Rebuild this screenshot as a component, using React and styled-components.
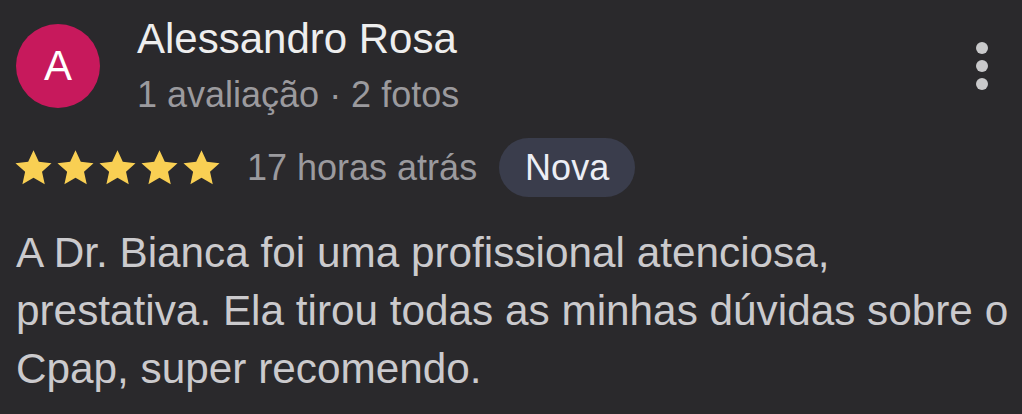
import React from 'react';
import styled, {createGlobalStyle} from "styled-components";

const GlobalStyle = createGlobalStyle`
    html, body {
        margin: 0;
        padding: 0;
        background-color: #2a292c;
    }
    body {
        font-family: 'Liberation Sans', Arial, sans-serif;
    }
`

function Star() {
    return (
        <svg width="39" height="37" viewBox="0 0 24 23">
            <path d="M12 0.8l3.3 7.2 7.9 0.8-5.9 5.3 1.7 7.8L12 17.9l-6.9 4 1.7-7.8L0.8 8.8l7.9-0.8z" fill="#f9cf53"/>
        </svg>
    )
}

export default function App() {
    const stars = [1, 2, 3, 4, 5]
    return (
        <>
        <GlobalStyle/>
        <Review>
            <Header>
                <Avatar>A</Avatar>
                <Author>
                    <Name>Alessandro Rosa</Name>
                    <Meta>1 avaliação · 2 fotos</Meta>
                </Author>
                <MoreButton aria-label="Mais opções">
                    <Dot/><Dot/><Dot/>
                </MoreButton>
            </Header>
            <RatingRow>
                <Stars>
                    {stars.map((s) => <Star key={s}/>)}
                </Stars>
                <When>17 horas atrás</When>
                <Badge>Nova</Badge>
            </RatingRow>
            <Body>
                A Dr. Bianca foi uma profissional atenciosa,<br/>
                prestativa. Ela tirou todas as minhas dúvidas sobre o<br/>
                Cpap, super recomendo.
            </Body>
        </Review>
        </>
    )
}

const Review = styled.div`
    display: flex;
    flex-direction: column;
    width: 1022px;
    height: 414px;
    box-sizing: border-box;
    padding: 15px 34px 0 16px;
    background-color: #2a292c;
    overflow: hidden;
    `
const Header = styled.div`
    display: flex;
    align-items: flex-start;
    `
const Avatar = styled.div`
    display: flex;
    align-items: center;
    justify-content: center;
    width: 84px;
    height: 84px;
    margin-top: 9px;
    border-radius: 50%;
    background-color: #c7195c;
    color: #ffffff;
    font-size: 42px;
    `
const Author = styled.div`
    display: flex;
    flex-direction: column;
    flex: 1;
    margin-left: 37px;
    `
const Name = styled.div`
    font-size: 42px;
    line-height: 48px;
    color: #eeeeee;
    `
const Meta = styled.div`
    margin-top: 10px;
    font-size: 36px;
    line-height: 44px;
    color: #9b9a9e;
    `
const MoreButton = styled.button`
    display: flex;
    flex-direction: column;
    gap: 6px;
    margin-top: 27px;
    padding: 0;
    border: none;
    background: none;
    `
const Dot = styled.span`
    width: 12px;
    height: 12px;
    border-radius: 50%;
    background-color: #c9c9cb;
    `
const RatingRow = styled.div`
    display: flex;
    align-items: center;
    margin-top: 21px;
    height: 59px;
    `
const Stars = styled.div`
    display: flex;
    gap: 3px;
    margin-left: -2px;
    margin-right: 26px;
    `
const When = styled.span`
    font-size: 36px;
    color: #9b9a9e;
    margin-right: 22px;
    `
const Badge = styled.span`
    display: flex;
    align-items: center;
    justify-content: center;
    width: 136px;
    height: 59px;
    border-radius: 30px;
    background-color: #3a3d4c;
    color: #eceef5;
    font-size: 36px;
    `
const Body = styled.p`
    margin: 27px -34px 0 0;
    font-size: 42.3px;
    line-height: 58px;
    white-space: nowrap;
    color: #cbcacd;
    `
